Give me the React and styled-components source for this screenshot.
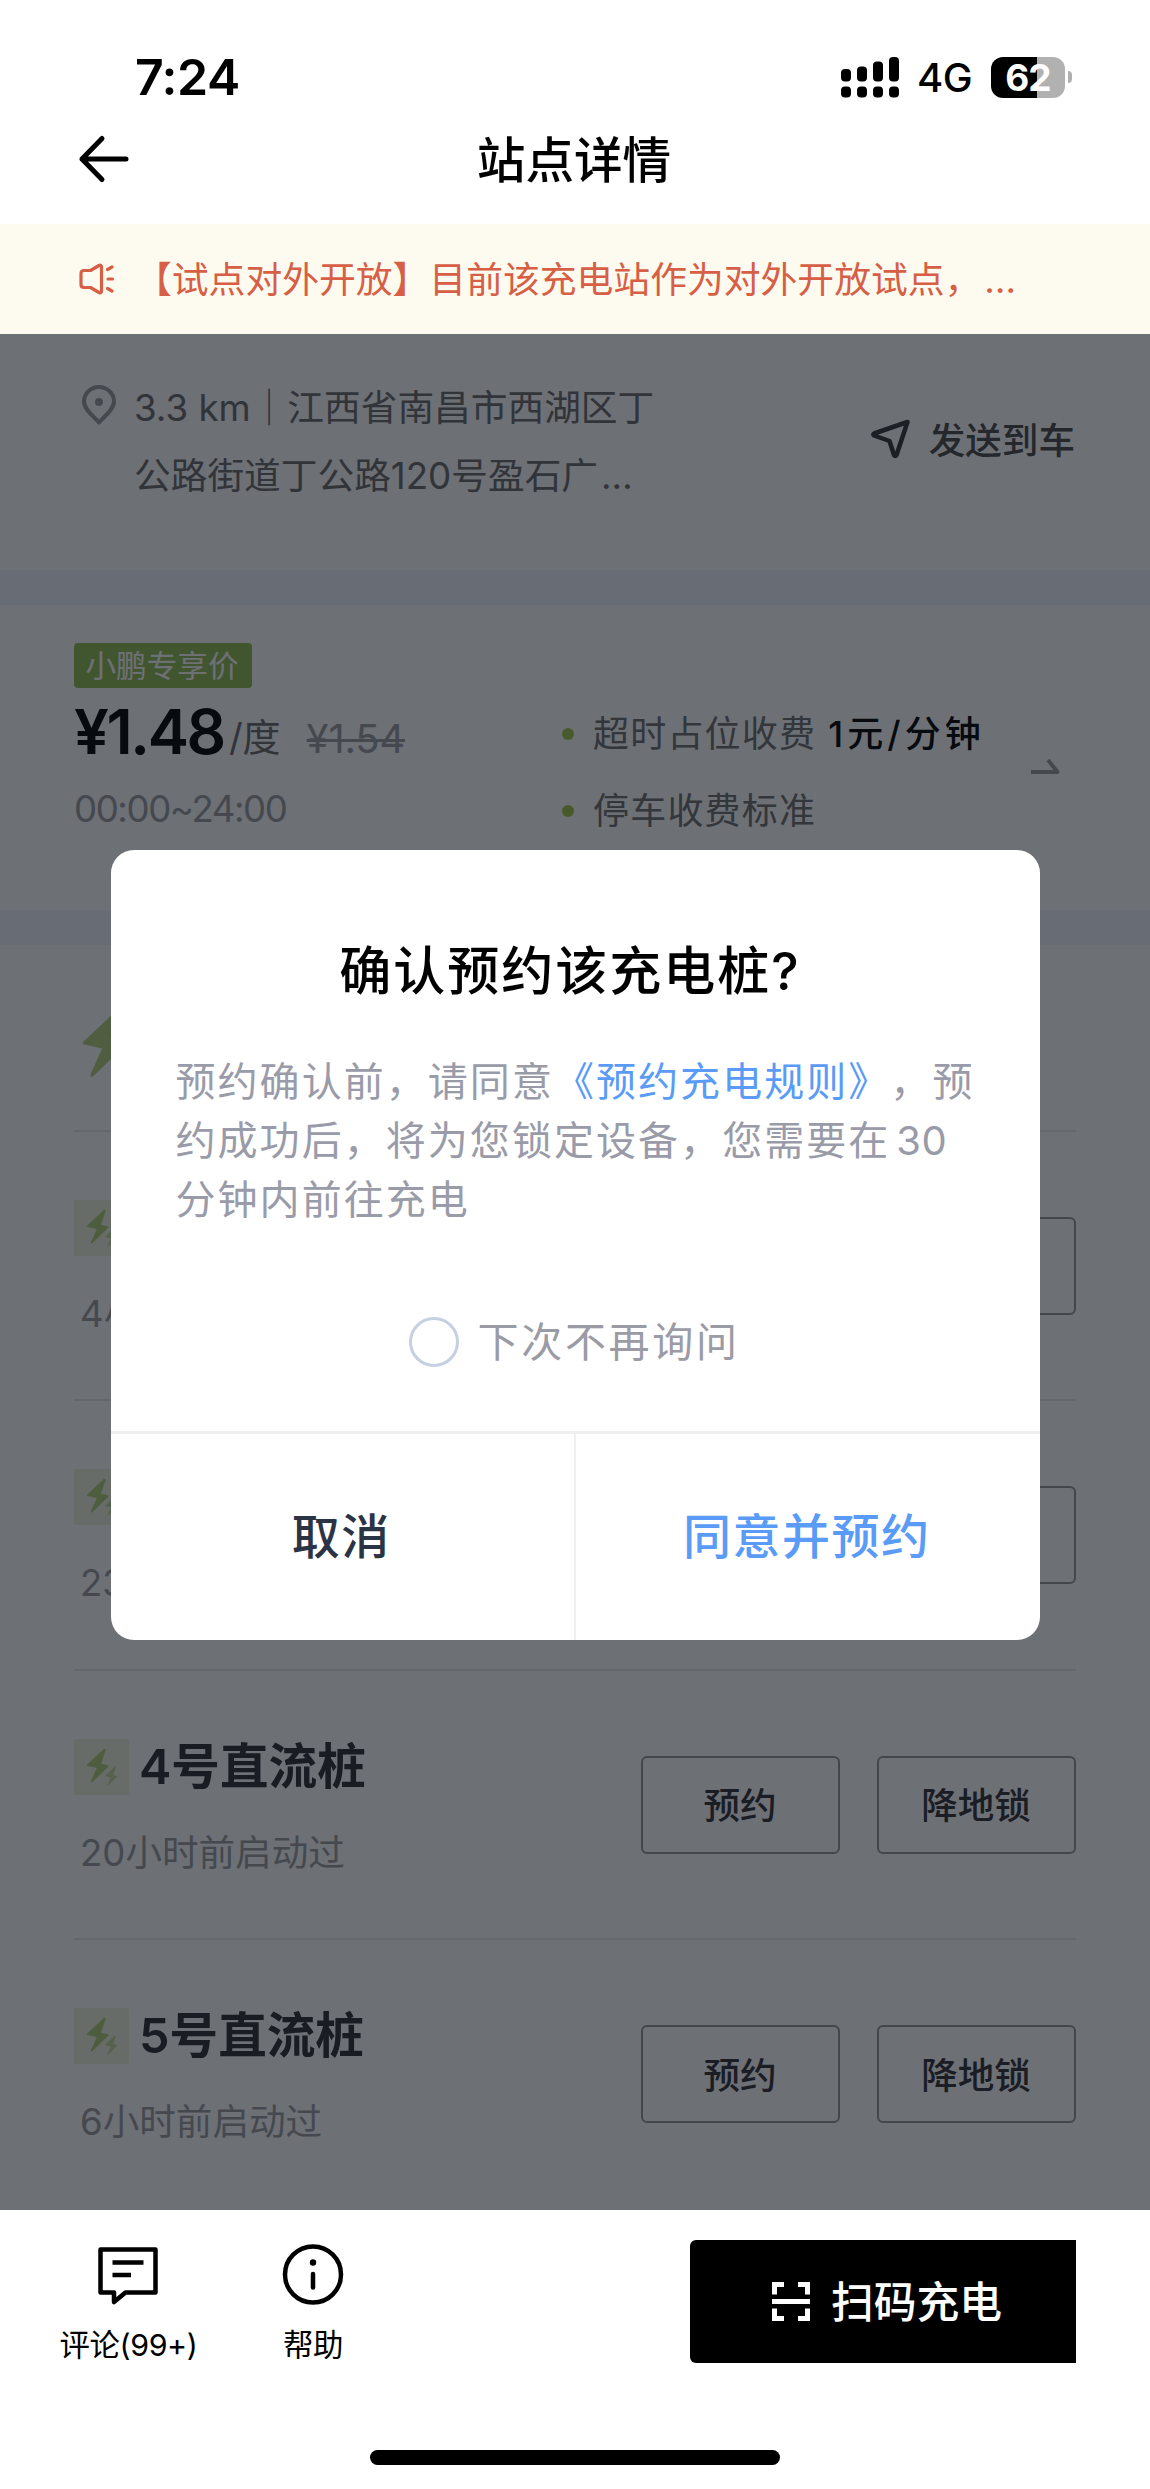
import React from 'react';
import styled, { createGlobalStyle, css } from 'styled-components';

const GlobalStyle = createGlobalStyle`
  * {
    box-sizing: border-box;
  }

  body {
    margin: 0;
    background: #ffffff;
    font-family: Inter, 'Noto Sans CJK SC', sans-serif;
    font-size: 36.6px;
    color: #000000;
    text-spacing-trim: space-all;
  }

  svg {
    display: block;
    flex: none;
  }
`;

const Screen = styled.div`
  position: relative;
  display: flex;
  flex-direction: column;
  width: 1150px;
  height: 2489px;
  overflow: hidden;
`;

/* Header */

const Header = styled.header`
  position: relative;
  z-index: 2;
  height: 224px;
  padding-top: 49px;
  background: #ffffff;
`;

const StatusBar = styled.div`
  display: flex;
  align-items: center;
  justify-content: space-between;
  height: 56px;
  padding: 0 78px 0 135px;
`;

const Clock = styled.span`
  font-size: 50px;
  font-weight: 600;
  line-height: 55px;
  letter-spacing: -0.5px;
`;

const StatusIcons = styled.div`
  display: flex;
  align-items: center;
`;

const Network = styled.span`
  margin: 2px 19px 0 18px;
  font-size: 40px;
  font-weight: 500;
  line-height: 40px;
  letter-spacing: -0.6px;
`;

const Battery = styled.div`
  width: 74px;
  height: 41px;
  border-radius: 12px;
  background: linear-gradient(to right, #000000 46px, #b1b1b1 46px);
  color: #ffffff;
  font-size: 37px;
  font-weight: 700;
  line-height: 41px;
  letter-spacing: -1px;
  text-align: center;
`;

const BatteryCap = styled.div`
  width: 4px;
  height: 12px;
  margin-left: 3px;
  border-radius: 0 4px 4px 0;
  background: #b1b1b1;
`;

const NavBar = styled.div`
  display: grid;
  grid-template-columns: 1fr auto 1fr;
  align-items: center;
  height: 108px;
  padding: 0 79px 0 77px;
`;

const NavTitle = styled.h1`
  margin: 3px 0 0;
  font-size: 48.6px;
  font-weight: 500;
  line-height: 60px;
`;

const Notice = styled.div`
  position: relative;
  z-index: 2;
  display: flex;
  align-items: center;
  height: 110px;
  padding: 0 79px;
  background: #fdfaef;
  color: #d75f45;
`;

const NoticeText = styled.span`
  margin: 1px 0 0 20px;
  font-size: 36.8px;
  line-height: 50px;
  white-space: nowrap;
`;

const Ellipsis = styled.span`
  margin-left: ${({ $gap }) => $gap}px;
`;

/* Page content */

const Content = styled.main`
  height: 1876px;
  overflow: hidden;
`;

const Band = styled.div`
  height: 35px;
  background: #f3f4fc;
`;

const Address = styled.section`
  display: flex;
  justify-content: space-between;
  height: 236px;
  padding: 40px 75px 0 82px;
`;

const AddressMain = styled.div`
  display: flex;
  gap: 18px;

  svg {
    margin-top: 11px;
  }
`;

const AddressText = styled.p`
  margin: 0;
  color: #6a6a6a;
  font-size: 36.7px;
  line-height: 67.5px;
  white-space: nowrap;
`;

const SendToCar = styled.div`
  display: flex;
  align-items: center;
  gap: 18px;
  height: 129px;
  color: #4a4a4a;
  font-weight: 500;
`;

const Pricing = styled.section`
  display: flex;
  height: 305px;
  padding: 38px 74px 0;
`;

const PriceColumn = styled.div`
  width: 487px;
`;

const Tag = styled.div`
  width: 178px;
  height: 45px;
  padding-right: 2px;
  border-radius: 4px;
  background: #91bc52;
  color: #ffffff;
  font-size: 30.6px;
  line-height: 46px;
  text-align: center;
`;

const PriceRow = styled.div`
  display: flex;
  align-items: baseline;
  height: 88px;
  line-height: 88px;
`;

const Price = styled.span`
  font-size: 62px;
  font-weight: 600;
  letter-spacing: -2.4px;
`;

const Unit = styled.span`
  align-self: flex-start;
  margin-left: 5px;
  color: #6a6a6a;
  font-size: 38px;
  line-height: 99px;
`;

const OldPrice = styled.span`
  align-self: flex-start;
  margin-left: 26px;
  color: #9b9da0;
  font-size: 40px;
  letter-spacing: -0.2px;
  line-height: 101px;
  text-decoration: line-through;
  text-decoration-thickness: 3px;
`;

const Hours = styled.div`
  margin-top: 11px;
  color: #9b9da0;
  letter-spacing: -1.4px;
  line-height: 44px;
`;

const FeeList = styled.div`
  display: flex;
  flex-direction: column;
  gap: 27px;
  width: 470px;
  padding-top: 63px;
`;

const Fee = styled.div`
  display: flex;
  align-items: center;
  height: 50px;
  color: #6e6e6e;
  font-size: 36px;
  letter-spacing: 1.2px;
  white-space: nowrap;

  &::before {
    content: '';
    width: 12px;
    height: 12px;
    margin: 5px 19px 0 1px;
    border-radius: 50%;
    background: #a3c846;
  }

  b {
    margin-left: 12px;
    color: #000000;
    font-weight: 500;
    letter-spacing: 4.1px;
  }
`;

const FeeArrow = styled.div`
  padding-top: 115px;
`;

const PileHeader = styled.div`
  height: 185px;
  margin: 0 74px;
  padding: 64px 0 0 8px;
`;

const Pile = styled.section`
  display: flex;
  justify-content: space-between;
  height: 269.4px;
  margin: 0 74px;
  padding-top: 68px;
  border-top: 2px solid #e8e8e8;
`;

const PileName = styled.div`
  display: flex;
  align-items: center;
  gap: 10px;
  height: 56px;
  font-size: 48.6px;
  font-weight: 600;
  line-height: 58px;
  color: #2d2f32;
  white-space: nowrap;
`;

const PileBadge = styled.div`
  width: 55px;
  height: 56px;
  border-radius: 2px;
  background: #eff5df;
`;

const PileUsage = styled.div`
  margin: 34px 0 0 6px;
  color: #9b9da0;
  line-height: 48px;
`;

const PileActions = styled.div`
  display: flex;
  gap: 37px;
  padding-top: 17px;
`;

const OutlineButton = styled.button`
  width: 199px;
  height: 98px;
  padding: 0 1px 2px 0;
  border: 2px solid #96989a;
  border-radius: 6px;
  background: none;
  color: #303236;
  font: inherit;
  font-weight: 500;
`;

/* Dialog */

const Mask = styled.div`
  position: absolute;
  inset: 0;
  z-index: 1;
  display: flex;
  align-items: center;
  justify-content: center;
  background: rgba(12, 17, 25, 0.6);
`;

const Dialog = styled.div`
  display: flex;
  flex-direction: column;
  width: 929px;
  height: 790px;
  border-radius: 23px;
  background: #ffffff;
  overflow: hidden;
`;

const DialogBody = styled.div`
  flex: 1;
  padding: 87px 0 0 65px;
`;

const DialogTitle = styled.h2`
  margin: 0 75px 0 0;
  font-size: 52px;
  font-weight: 500;
  line-height: 70px;
  letter-spacing: 2px;
  text-align: center;
`;

const DialogText = styled.p`
  margin: 45px 0 0;
  color: #9a9ba8;
  font-size: 40px;
  line-height: 59px;
  letter-spacing: 2.05px;
  white-space: nowrap;

  a {
    color: #5a9bf8;
  }
`;

const Count = styled.span`
  margin-left: 6px;
  letter-spacing: 0.5px;
`;

const RemindOption = styled.label`
  display: flex;
  align-items: center;
  gap: 19px;
  margin-top: 86px;
  padding-left: 233px;
  color: #9a9ba5;
  font-size: 41px;
  line-height: 54px;
  letter-spacing: 2.7px;
`;

const Radio = styled.span`
  width: 50px;
  height: 50px;
  border: 3px solid #c5d0e2;
  border-radius: 50%;
`;

const DialogActions = styled.div`
  display: flex;
  height: 209px;
  border-top: 3px solid #efeff1;
`;

const DialogButton = styled.button`
  flex: 1;
  padding: 0 2px 8px 0;
  border: none;
  background: none;
  color: #2b3445;
  font: inherit;
  font-size: 48px;
  font-weight: 500;
  letter-spacing: 1.5px;

  ${({ $primary }) =>
    $primary &&
    css`
      border-left: 2px solid #efeff1;
      color: #5a9bf8;
    `}
`;

/* Footer */

const Footer = styled.footer`
  position: relative;
  z-index: 2;
  display: flex;
  flex-direction: column;
  align-items: center;
  height: 279px;
  background: #ffffff;
`;

const FooterRow = styled.div`
  display: flex;
  width: 100%;
  height: 240px;
  padding: 30px 74px 0 58px;
`;

const FooterItem = styled.div`
  display: flex;
  flex-direction: column;
  align-items: center;
  width: ${({ $width }) => $width}px;
  padding-top: 3px;
  font-size: 30.4px;
  line-height: 44px;
  letter-spacing: -0.4px;
  white-space: nowrap;

  svg {
    margin-bottom: 18px;
  }
`;

const ScanButton = styled.button`
  display: flex;
  align-items: center;
  justify-content: center;
  gap: 21px;
  width: 386px;
  height: 123px;
  margin-left: auto;
  padding: 0 0 0 8px;
  border: none;
  border-radius: 6px 0 0 6px;
  background: #000000;
  color: #ffffff;
  font: inherit;
  font-size: 42.8px;
  font-weight: 500;
`;

const ScanLabel = styled.span`
  padding-bottom: 5px;
`;

const HomeIndicator = styled.div`
  width: 410px;
  height: 15px;
  border-radius: 8px;
  background: #000000;
`;

const SignalIcon = () => (
  <svg width="58" height="41" viewBox="0 0 58 41">
    {[12, 9.5, 4.5, 0].map((top, i) => (
      <g key={top}>
        <rect x={i * 16} y={top} width="10" height={24.5 - top} rx="4" />
        <rect x={i * 16} y="29.5" width="10" height="11" rx="4" />
      </g>
    ))}
  </svg>
);

const BackIcon = () => (
  <svg width="54" height="50" viewBox="0 0 54 50" fill="none" stroke="#000" strokeWidth="5" strokeLinecap="round" strokeLinejoin="round">
    <path d="M25 4.5L5 25l20 20.5M5 25h44" />
  </svg>
);

const SpeakerIcon = () => (
  <svg width="36" height="34" viewBox="0 0 36 34" fill="none" stroke="#d75f45" strokeWidth="3.2" strokeLinejoin="round" strokeLinecap="round">
    <path d="M5 8.5h6.5L20 3.5q2.500-1.200 2.500 1.500v24q0 2.700-2.500 1.500L11.500 25.500H5Q2 25.500 2 22.500v-11Q2 8.500 5 8.500z" />
    <path d="M28.500 7.500l4.500-2.500M29 17h4.500M28.500 26.500l4.500 2.500" />
  </svg>
);

const PinIcon = () => (
  <svg width="34" height="40" viewBox="0 0 34 40" fill="none" stroke="#9b9da0" strokeWidth="4" strokeLinejoin="round">
    <path d="M17 37.500C13 32.500 2 25 2 16.500a15 14.500 0 0 1 30 0C32 25 21 32.500 17 37.500z" />
    <circle cx="17" cy="17" r="4" fill="#9b9da0" stroke="none" />
  </svg>
);

const SendIcon = () => (
  <svg width="40" height="40" viewBox="0 0 40 40" fill="none" stroke="#36383a" strokeWidth="4.5" strokeLinejoin="round">
    <path d="M36.500 3L3 14.500q-1.500 1 0 2L18.500 22l4.500 14q1.200 2 2.500 0z" />
  </svg>
);

const HalfArrowIcon = () => (
  <svg width="30" height="17" viewBox="0 0 30 17" fill="none" stroke="#9b9b9b" strokeWidth="4">
    <path d="M0 14h26.500L17 2" strokeLinejoin="round" />
  </svg>
);

const boltPath = 'M17.200.6L.8 16q-1.200 1.200.5 1.500l9 2L4.500 32.500q-.5 2.500 1.500 1L21.500 18.500q1.200-1.200-.5-1.700l-6.500-1.600L19 2Q19.500-.8 17.200.6z';

const BigBoltIcon = () => (
  <svg width="44" height="70" viewBox="0 0 22.500 34.500">
    <path d={boltPath} fill="#b6d07a" />
  </svg>
);

const BadgeIcon = () => (
  <svg width="55" height="56" viewBox="0 0 55 56">
    <path d={boltPath} transform="translate(12.500 9.500)" fill="#b0d074" />
    <path d={boltPath} transform="translate(31 27.500) scale(.56)" fill="#c2da98" />
  </svg>
);

const CommentIcon = () => (
  <svg width="62" height="62" viewBox="0 0 62 62" fill="none" stroke="#000" strokeWidth="4.500" strokeLinejoin="round">
    <path d="M2.500 6.500h55v43H27.500L16 59V49.500H2.500z" />
    <path d="M14.500 19.500H45.500M14.500 32h18.500" />
  </svg>
);

const InfoIcon = () => (
  <svg width="62" height="62" viewBox="0 0 62 62" fill="none" stroke="#000" strokeWidth="4.500" strokeLinecap="round">
    <circle cx="31" cy="31.500" r="28" />
    <path d="M31 31v13.500" />
    <circle cx="31" cy="19.500" r="3.200" fill="#000" stroke="none" />
  </svg>
);

const ScanIcon = () => (
  <svg width="38" height="39" viewBox="0 0 38 39" fill="none" stroke="#fff" strokeWidth="5">
    <path d="M2.500 12.500v-10H12M26 2.500h9.500v10M2.500 26.500v10H12M26 36.500h9.500v-10M0 19.500h38" />
  </svg>
);

const piles = [
  { id: 2, usage: '4小时前启动过', actions: [''] },
  { id: 3, usage: '23小时前启动过', actions: [''] },
  { id: 4, name: '4号直流桩', usage: '20小时前启动过', actions: ['预约', '降地锁'] },
  { id: 5, name: '5号直流桩', usage: '6小时前启动过', actions: ['预约', '降地锁'] },
];

const App = () => {
  return (
    <Screen>
      <GlobalStyle />

      <Header>
        <StatusBar>
          <Clock>7:24</Clock>
          <StatusIcons>
            <SignalIcon />
            <Network>4G</Network>
            <Battery>62</Battery>
            <BatteryCap />
          </StatusIcons>
        </StatusBar>
        <NavBar>
          <BackIcon />
          <NavTitle>站点详情</NavTitle>
        </NavBar>
      </Header>

      <Notice>
        <SpeakerIcon />
        <NoticeText>
          【试点对外开放】目前该充电站作为对外开放试点，<Ellipsis $gap={3}>…</Ellipsis>
        </NoticeText>
      </Notice>

      <Content>
        <Address>
          <AddressMain>
            <PinIcon />
            <AddressText>
              3.3 km｜江西省南昌市西湖区丁
              <br />
              公路街道丁公路120号盈石广<Ellipsis $gap={3}>…</Ellipsis>
            </AddressText>
          </AddressMain>
          <SendToCar>
            <SendIcon />
            发送到车
          </SendToCar>
        </Address>
        <Band />

        <Pricing>
          <PriceColumn>
            <Tag>小鹏专享价</Tag>
            <PriceRow>
              <Price>¥1.48</Price>
              <Unit>/度</Unit>
              <OldPrice>¥1.54</OldPrice>
            </PriceRow>
            <Hours>00:00~24:00</Hours>
          </PriceColumn>
          <FeeList>
            <Fee>
              超时占位收费<b>1元/分钟</b>
            </Fee>
            <Fee>停车收费标准</Fee>
          </FeeList>
          <FeeArrow>
            <HalfArrowIcon />
          </FeeArrow>
        </Pricing>
        <Band />

        <PileHeader>
          <BigBoltIcon />
        </PileHeader>
        {piles.map((pile) => (
          <Pile key={pile.id}>
            <div>
              <PileName>
                <PileBadge>
                  <BadgeIcon />
                </PileBadge>
                {pile.name}
              </PileName>
              <PileUsage>{pile.usage}</PileUsage>
            </div>
            <PileActions>
              {pile.actions.map((label) => (
                <OutlineButton key={label}>{label}</OutlineButton>
              ))}
            </PileActions>
          </Pile>
        ))}
      </Content>

      <Mask>
        <Dialog>
          <DialogBody>
            <DialogTitle>确认预约该充电桩?</DialogTitle>
            <DialogText>
              预约确认前，请同意<a>《预约充电规则》</a>，预
              <br />
              约成功后，将为您锁定设备，您需要在<Count>30</Count>
              <br />
              分钟内前往充电
            </DialogText>
            <RemindOption>
              <Radio />
              下次不再询问
            </RemindOption>
          </DialogBody>
          <DialogActions>
            <DialogButton>取消</DialogButton>
            <DialogButton $primary>同意并预约</DialogButton>
          </DialogActions>
        </Dialog>
      </Mask>

      <Footer>
        <FooterRow>
          <FooterItem $width={141}>
            <CommentIcon />
            评论(99+)
          </FooterItem>
          <FooterItem $width={228}>
            <InfoIcon />
            帮助
          </FooterItem>
          <ScanButton>
            <ScanIcon />
            <ScanLabel>扫码充电</ScanLabel>
          </ScanButton>
        </FooterRow>
        <HomeIndicator />
      </Footer>
    </Screen>
  );
};

export default App;
